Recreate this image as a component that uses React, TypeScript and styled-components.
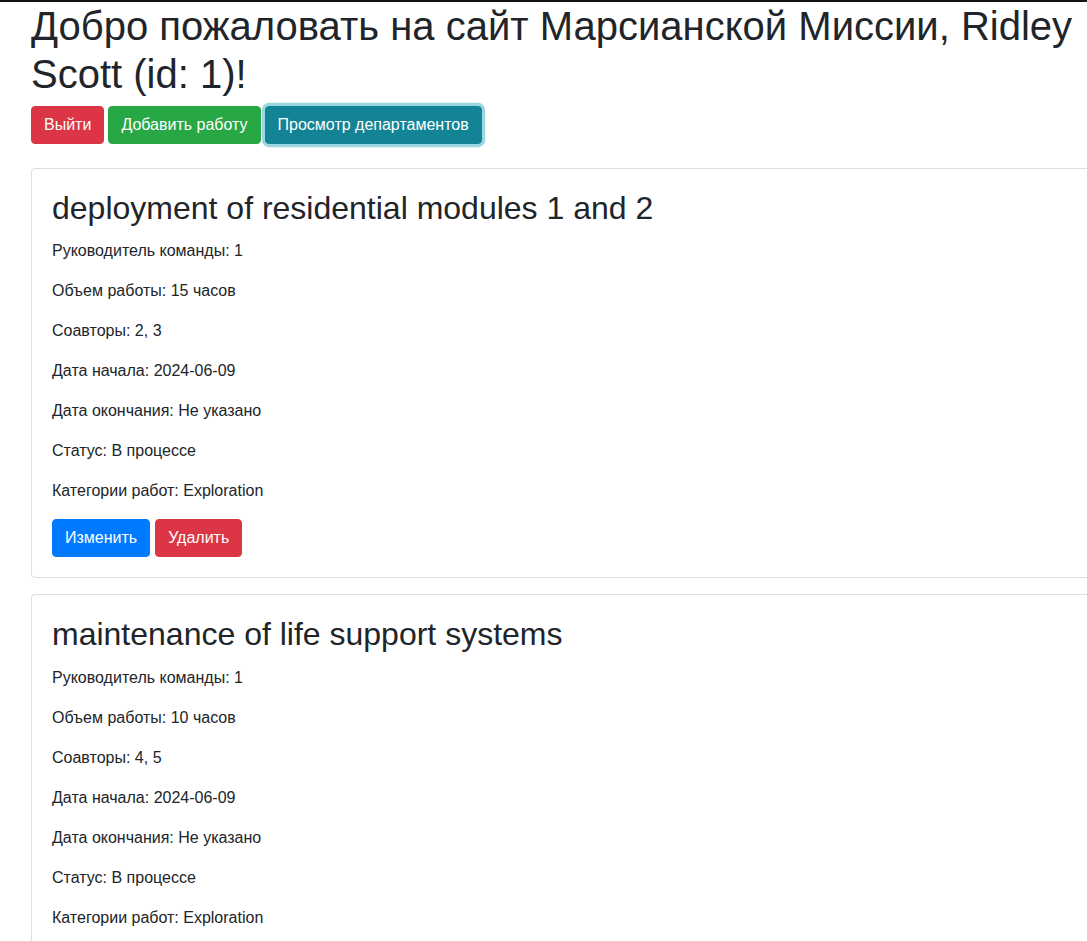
import React from "react";
import styled, { createGlobalStyle } from "styled-components";

const Global = createGlobalStyle`
  html, body { margin: 0; padding: 0; background: #fff; }
  body {
    font-family: "Liberation Sans", Arial, sans-serif;
    font-size: 16px;
    line-height: 1.5;
    color: #212529;
    overflow-x: hidden;
  }
  * { box-sizing: border-box; }
`;

const TopBar = styled.div`
  height: 2px;
  background: #111214;
`;

const Page = styled.div`
  padding-left: 31px;
  width: 1141px;
`;

const Title = styled.h1`
  margin: 0 0 8px;
  font-size: 40px;
  font-weight: 500;
  line-height: 1.2;
`;

const Actions = styled.div`
  display: flex;
  gap: 4px;
  margin-bottom: 24px;
`;

const variants: Record<string, { bg: string; ring?: string }> = {
  danger: { bg: "#dc3545" },
  success: { bg: "#28a745" },
  info: { bg: "#138496", ring: "rgba(58,176,195,.5)" },
  primary: { bg: "#007bff" },
};

const Button = styled.button<{ $v: keyof typeof variants }>`
  font-family: inherit;
  font-size: 16px;
  line-height: 1.5;
  padding: 6px 12px;
  border: 1px solid ${(p) => variants[p.$v].bg};
  border-radius: 4px;
  color: #fff;
  background: ${(p) => variants[p.$v].bg};
  box-shadow: ${(p) => (variants[p.$v].ring ? `0 0 0 3.2px ${variants[p.$v].ring}` : "none")};
  cursor: pointer;
`;

const Card = styled.div`
  border: 1px solid rgba(0, 0, 0, 0.125);
  border-radius: 4px;
  margin-bottom: 16px;
  padding: 20px;
`;

const CardTitle = styled.h2`
  margin: 0 0 12px;
  font-size: 32px;
  font-weight: 500;
  line-height: 1.2;
`;

const Line = styled.p`
  margin: 0 0 16px;
`;

const CardActions = styled.div`
  display: flex;
  gap: 5px;
`;

type Job = {
  title: string;
  leader: number;
  hours: number;
  collaborators: string;
  start: string;
};

const jobs: Job[] = [
  { title: "deployment of residential modules 1 and 2", leader: 1, hours: 15, collaborators: "2, 3", start: "2024-06-09" },
  { title: "maintenance of life support systems", leader: 1, hours: 10, collaborators: "4, 5", start: "2024-06-09" },
];

export default function App() {
  return (
    <>
      <Global />
      <TopBar />
      <Page>
        <Title>Добро пожаловать на сайт Марсианской Миссии, Ridley Scott (id: 1)!</Title>
        <Actions>
          <Button $v="danger">Выйти</Button>
          <Button $v="success">Добавить работу</Button>
          <Button $v="info">Просмотр департаментов</Button>
        </Actions>
        {jobs.map((j) => (
          <Card key={j.title}>
            <CardTitle>{j.title}</CardTitle>
            <Line>Руководитель команды: {j.leader}</Line>
            <Line>Объем работы: {j.hours} часов</Line>
            <Line>Соавторы: {j.collaborators}</Line>
            <Line>Дата начала: {j.start}</Line>
            <Line>Дата окончания: Не указано</Line>
            <Line>Статус: В процессе</Line>
            <Line>Категории работ: Exploration</Line>
            <CardActions>
              <Button $v="primary">Изменить</Button>
              <Button $v="danger">Удалить</Button>
            </CardActions>
          </Card>
        ))}
      </Page>
    </>
  );
}
